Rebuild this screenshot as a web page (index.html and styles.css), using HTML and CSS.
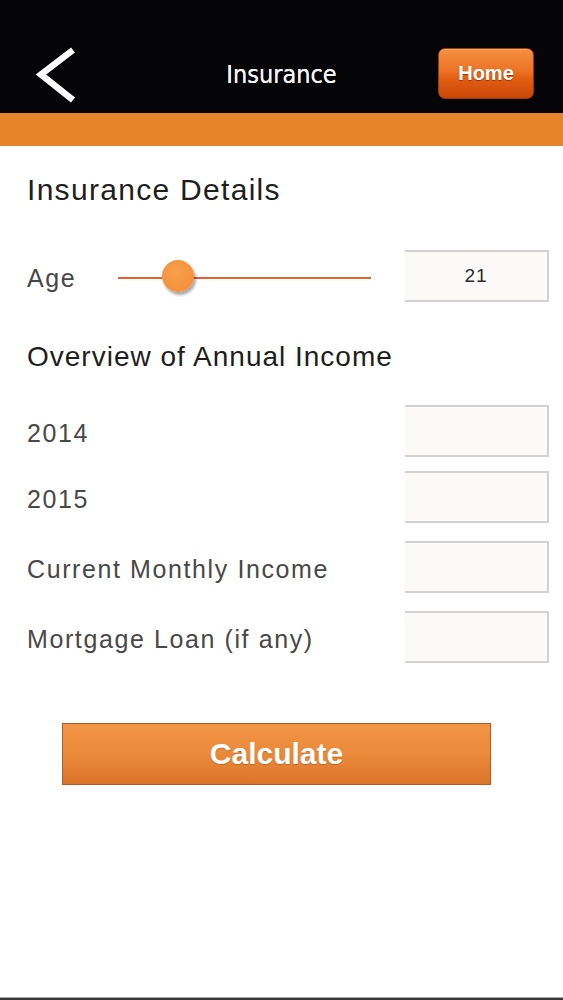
FILE: index.html
```html
<!DOCTYPE html>
<html lang="en">
<head>
<meta charset="utf-8">
<title>Insurance</title>
<link rel="stylesheet" href="styles.css">
</head>
<body>
<div class="screen">
  <header class="topbar">
    <div class="nav">
      <a class="back" href="#" aria-label="Back">
        <svg width="44" height="60" viewBox="0 0 44 60"><polyline points="40,5 8,29.5 40,55" fill="none" stroke="#ffffff" stroke-width="6.5" stroke-linejoin="miter"/></svg>
      </a>
      <h1 class="title">Insurance</h1>
      <a class="home" href="#">Home</a>
    </div>
  </header>
  <div class="stripe"></div>
  <main class="content">
    <h2 class="heading heading-details">Insurance Details</h2>
    <div class="row row-age">
      <span class="label label-age">Age</span>
      <div class="slider">
        <div class="track"></div>
        <div class="knob"></div>
      </div>
      <div class="field field-value">21</div>
    </div>
    <h2 class="heading heading-overview">Overview of Annual Income</h2>
    <div class="row row-first">
      <span class="label">2014</span>
      <div class="field"></div>
    </div>
    <div class="row row-second">
      <span class="label">2015</span>
      <div class="field"></div>
    </div>
    <div class="row row-next">
      <span class="label">Current Monthly Income</span>
      <div class="field"></div>
    </div>
    <div class="row row-next">
      <span class="label">Mortgage Loan (if any)</span>
      <div class="field"></div>
    </div>
    <button class="calc" type="button">Calculate</button>
  </main>
  <div class="bottom-line"></div>
</div>
</body>
</html>
```
FILE: styles.css
```css
* { box-sizing: border-box; }
html, body { margin: 0; padding: 0; background: #ffffff; }
body { font-family: "Liberation Sans", Arial, sans-serif; }

.screen {
  width: 563px;
  height: 1000px;
  display: flex;
  flex-direction: column;
  overflow: hidden;
}

.topbar {
  height: 113px;
  background: #050407;
  padding-top: 36px;
}
.nav {
  height: 77px;
  display: grid;
  grid-template-columns: 1fr auto 1fr;
  align-items: center;
}
.back {
  justify-self: start;
  margin-left: 33px;
  display: flex;
  width: 44px;
  height: 60px;
}
.title {
  margin: 0;
  font-family: "DejaVu Sans Condensed", "DejaVu Sans", sans-serif;
  font-stretch: condensed;
  font-weight: normal;
  font-size: 25px;
  color: #f4f4f4;
  line-height: 30px;
  text-shadow: 0 0 0.6px #ffffff;
}
.home {
  justify-self: end;
  margin-right: 29px;
  margin-top: -2px;
  width: 96px;
  height: 51px;
  border-radius: 7px;
  border: 1px solid #9a3a08;
  background: linear-gradient(#f4903f 0%, #ec7226 45%, #e25f12 60%, #c94808 100%);
  box-shadow: inset 0 1px 0 rgba(255,255,255,0.25);
  color: #ffffff;
  font-weight: bold;
  font-size: 20px;
  text-decoration: none;
  display: flex;
  align-items: center;
  justify-content: center;
  text-shadow: 0 1px 1px rgba(90,30,0,0.6);
}

.stripe {
  height: 33px;
  background: #e6832b;
}

.content {
  flex: 1;
  padding: 0 14px 0 27px;
  display: flex;
  flex-direction: column;
}

.heading {
  margin: 0;
  font-weight: normal;
  color: #1e1e1e;
  line-height: 36px;
}
.heading-details {
  margin-top: 26px;
  font-size: 30px;
  letter-spacing: 1.3px;
}
.heading-overview {
  margin-top: 37px;
  font-size: 28px;
  letter-spacing: 1px;
}

.row {
  height: 52px;
  display: flex;
  align-items: center;
}
.row-age { margin-top: 42px; }
.row-first { margin-top: 30px; }
.row-second { margin-top: 14px; }
.row-next { margin-top: 18px; }

.label {
  font-size: 25px;
  letter-spacing: 1.6px;
  color: #484848;
  padding-top: 4px;
}
.label-age { width: 91px; }

.slider {
  position: relative;
  width: 253px;
  height: 40px;
}
.track {
  position: absolute;
  left: 0;
  right: 0;
  top: 21px;
  height: 2px;
  background: #e2622e;
}
.knob {
  position: absolute;
  left: 44px;
  top: 4px;
  width: 32px;
  height: 32px;
  border-radius: 50%;
  background: radial-gradient(circle at 45% 40%, #f8a04c 0%, #f59340 60%, #ee8a36 100%);
  box-shadow: 2px 3px 3px rgba(0,0,0,0.35);
}

.field {
  margin-left: auto;
  width: 144px;
  height: 52px;
  background: #fbfaf8;
  border-top: 2px solid #d2d2d2;
  border-right: 2px solid #d2d2d2;
  border-bottom: 2px solid #d2d2d2;
  display: flex;
  align-items: center;
  justify-content: center;
  font-size: 19px;
  letter-spacing: 1px;
  color: #2c2c2c;
}

.calc {
  margin-top: 60px;
  margin-left: 35px;
  width: 429px;
  height: 62px;
  border: 1px solid #b45a22;
  background: linear-gradient(#f29546 0%, #ea8a3a 50%, #dc742a 100%);
  color: #ffffff;
  font-family: "Liberation Sans", Arial, sans-serif;
  font-weight: bold;
  font-size: 30px;
  text-shadow: 0 1px 1px rgba(120,50,0,0.35);
  padding: 0;
  cursor: pointer;
}

.bottom-line {
  height: 3px;
  border-top: 1px solid #a8a8a8;
  background: #3a3a3a;
}
```
